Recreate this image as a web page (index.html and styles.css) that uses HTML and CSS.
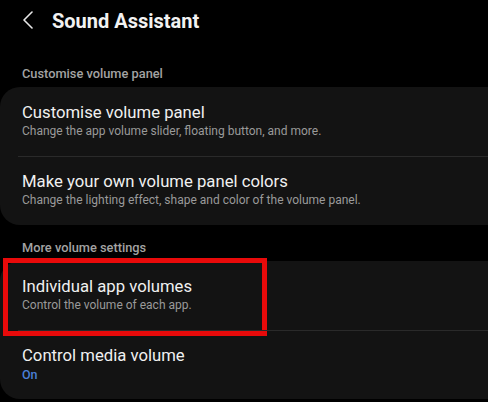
FILE: index.html
```html
<!DOCTYPE html>
<html>
<head>
<meta charset="utf-8">
<link rel="stylesheet" href="styles.css">
</head>
<body>
<div class="screen">
  <header class="header">
    <svg class="back" width="12" height="18" viewBox="0 0 12 18"><path d="M10 1 L2 9 L10 17" fill="none" stroke="#e8e8e8" stroke-width="1.6" stroke-linecap="round" stroke-linejoin="round"/></svg>
    <h1 class="title">Sound Assistant</h1>
  </header>
  <div class="section-label first">Customise volume panel</div>
  <div class="card">
    <div class="item">
      <div class="item-title">Customise volume panel</div>
      <div class="item-sub">Change the app volume slider, floating button, and more.</div>
    </div>
    <div class="item">
      <div class="item-title">Make your own volume panel colors</div>
      <div class="item-sub">Change the lighting effect, shape and color of the volume panel.</div>
    </div>
  </div>
  <div class="section-label">More volume settings</div>
  <div class="card">
    <div class="item highlighted">
      <div class="item-title">Individual app volumes</div>
      <div class="item-sub">Control the volume of each app.</div>
      <div class="annotation"></div>
    </div>
    <div class="item">
      <div class="item-title">Control media volume</div>
      <div class="item-sub on">On</div>
    </div>
  </div>
</div>
</body>
</html>
```

FILE: styles.css
```css
html, body {
  margin: 0;
  padding: 0;
  background: #000;
  overflow: hidden;
}
body {
  font-family: Roboto, "Noto Sans", sans-serif;
  color: #f0f0f0;
}
.screen {
  width: 488px;
  height: 402px;
  overflow: hidden;
}
.header {
  display: flex;
  align-items: center;
  height: 42px;
  padding-left: 22px;
}
.back {
  display: block;
  margin-top: -2px;
}
.title {
  margin: 0 0 0 18px;
  font-size: 20px;
  font-weight: 700;
  line-height: 28px;
  color: #f2f2f2;
}
.section-label {
  padding: 14px 0 5px 22px;
  font-size: 12.8px;
  line-height: 17px;
  font-weight: 500;
  color: #a3a3a3;
}
.section-label.first {
  padding-top: 23px;
}
.card {
  background: #131313;
  border-radius: 20px 0 0 20px;
  margin-right: -30px;
}
.item {
  position: relative;
  padding: 16px 0 16px 22px;
}
.item + .item {
  border-top: 1px solid #2a2a2a;
  margin-left: 18px;
  padding-left: 4px;
  padding-top: 15px;
}
.item-title {
  font-size: 16.7px;
  line-height: 20px;
  color: #f0f0f0;
}
.item-sub {
  font-size: 12px;
  line-height: 17px;
  color: #9a9a9a;
}
.item-sub.on {
  color: #4a7fd8;
  font-weight: 500;
  font-size: 12.5px;
}
.annotation {
  position: absolute;
  left: 3px;
  top: -3px;
  width: 254px;
  height: 68px;
  border: 5px solid #e80a0a;
}
```
